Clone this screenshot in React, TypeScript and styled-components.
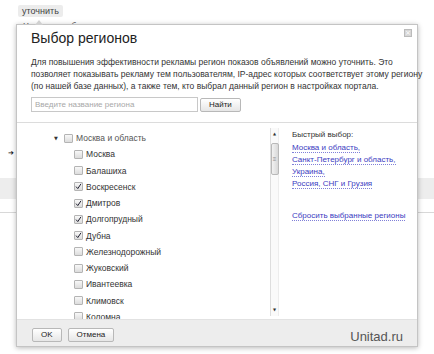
import React from "react"
import styled, { createGlobalStyle } from "styled-components"

const GlobalStyle = createGlobalStyle`
  html, body {
    margin: 0;
    padding: 0;
    background: #ffffff;
    font-family: "Liberation Sans", Arial, sans-serif;
  }
`

type Region = { name: string, checked: boolean }

const regions: Region[] = [
  { name: "Москва", checked: false },
  { name: "Балашиха", checked: false },
  { name: "Воскресенск", checked: true },
  { name: "Дмитров", checked: true },
  { name: "Долгопрудный", checked: true },
  { name: "Дубна", checked: true },
  { name: "Железнодорожный", checked: false },
  { name: "Жуковский", checked: false },
  { name: "Ивантеевка", checked: false },
  { name: "Климовск", checked: false },
  { name: "Коломна", checked: false },
]

const quickLinks = [
  "Москва и область,",
  "Санкт-Петербург и область,",
  "Украина,",
  "Россия, СНГ и Грузия",
]

function CheckBox({ checked }: { checked: boolean }) {
  return (
    <Box>
      {checked && (
        <svg width="7" height="7" viewBox="0 0 7 7">
          <path d="M1 3.6 L2.8 5.6 L6 0.8" fill="none" stroke="#223" strokeWidth="1" />
        </svg>
      )}
    </Box>
  )
}

export default function App() {
  return (
    <Page>
      <GlobalStyle />
      <Tag>уточнить</Tag>
      <HiddenLine>Часы на выбор</HiddenLine>
      <ArrowRow>➔</ArrowRow>
      <Band />
      <Rule />

      <Dialog>
        <Header>
          <Title>Выбор регионов</Title>
          <Close>×</Close>
        </Header>
        <Description>
          Для повышения эффективности рекламы регион показов объявлений можно уточнить. Это<br />
          позволяет показывать рекламу тем пользователям, IP-адрес которых соответствует этому региону<br />
          (по нашей базе данных), а также тем, кто выбрал данный регион в настройках портала.
        </Description>
        <SearchRow>
          <SearchInput placeholder="Введите название региона" />
          <Button>Найти</Button>
        </SearchRow>

        <Body>
          <Tree>
            <TreeRow $level={0}>
              <Toggle>▼</Toggle>
              <CheckBox checked={false} />
              <ParentLabel>Москва и область</ParentLabel>
            </TreeRow>
            {regions.map(r => (
              <TreeRow key={r.name} $level={1}>
                <CheckBox checked={r.checked} />
                <Label>{r.name}</Label>
              </TreeRow>
            ))}
          </Tree>

          <Scrollbar>
            <ScrollArrow>▲</ScrollArrow>
            <Thumb>≡</Thumb>
            <ScrollArrow $down>▼</ScrollArrow>
          </Scrollbar>

          <Quick>
            <QuickTitle>Быстрый выбор:</QuickTitle>
            {quickLinks.map(l => (
              <QuickItem key={l}><QuickLink>{l}</QuickLink></QuickItem>
            ))}
            <ResetItem><QuickLink>Сбросить выбранные регионы</QuickLink></ResetItem>
          </Quick>
        </Body>

        <Footer>
          <Button $w={22}>OK</Button>
          <Button $w={42}>Отмена</Button>
          <Watermark>Unitad.ru</Watermark>
        </Footer>
      </Dialog>
    </Page>
  )
}

const Page = styled.div`
  position: relative;
  width: 434px;
  height: 354px;
  overflow: hidden;
  background: #fff;
`

const Tag = styled.div`
  display: inline-block;
  margin: 5px 0 0 18px;
  padding: 0 4px;
  height: 12px;
  line-height: 12px;
  background: #ececec;
  border-radius: 2px;
  font-size: 9px;
  color: #444;
`

const HiddenLine = styled.div`
  margin: 3px 0 0 23px;
  font-size: 9px;
  line-height: 10px;
  color: #555;
`

const ArrowRow = styled.div`
  margin: 117px 0 0 8px;
  height: 10px;
  font-family: "DejaVu Sans", sans-serif;
  font-size: 7px;
  line-height: 10px;
  color: #111;
`

const Band = styled.div`
  margin-top: 20px;
  height: 21px;
  background: #ededed;
`

const Rule = styled.div`
  margin-top: 13px;
  height: 1px;
  background: #d8d8d8;
`

const Dialog = styled.div`
  position: absolute;
  left: 16px;
  top: 24px;
  width: 400px;
  height: 321px;
  display: flex;
  flex-direction: column;
  background: #fff;
  border: 1px solid #c4c4c4;
  box-shadow: 0 1px 5px rgba(0, 0, 0, 0.28);

  &::before {
    content: "";
    position: absolute;
    left: 18px;
    top: -5px;
    width: 0;
    height: 0;
    border-left: 4px solid transparent;
    border-right: 4px solid transparent;
    border-bottom: 5px solid #d0d0d0;
  }
`

const Header = styled.div`
  position: relative;
  padding: 4px 14px 0;
`

const Title = styled.div`
  font-size: 14px;
  line-height: 18px;
  color: #222;
`

const Close = styled.div`
  position: absolute;
  right: 5px;
  top: 4px;
  width: 6px;
  height: 6px;
  border: 1px solid #bbb;
  background: #d6d6d6;
  color: #fff;
  font-size: 7px;
  line-height: 6px;
  text-align: center;
  font-family: "DejaVu Sans", sans-serif;
`

const Description = styled.div`
  margin: 9px 14px 0;
  font-size: 8.5px;
  line-height: 12px;
  color: #333;
  white-space: nowrap;
`

const SearchRow = styled.div`
  display: flex;
  align-items: center;
  gap: 2px;
  padding: 5px 14px 10px;
  border-bottom: 1px solid #dcdcdc;
`

const SearchInput = styled.input`
  box-sizing: border-box;
  width: 167px;
  height: 15px;
  margin: 0;
  padding: 0 3px;
  border: 1px solid #c8c8c8;
  font-family: "Liberation Sans", Arial, sans-serif;
  font-size: 8px;
  color: #333;
  outline: none;

  &::placeholder {
    color: #a8a8a8;
  }
`

const Button = styled.button<{ $w?: number }>`
  box-sizing: border-box;
  min-width: ${p => (p.$w ? `${p.$w}px` : "auto")};
  height: 14px;
  margin: 0;
  padding: 0 8px;
  border: 1px solid #b8b8b8;
  border-radius: 2px;
  background: linear-gradient(#ffffff, #e6e6e6);
  font-family: "Liberation Sans", Arial, sans-serif;
  font-size: 8px;
  line-height: 12px;
  color: #222;
`

const Body = styled.div`
  flex: 1;
  display: grid;
  grid-template-columns: 253px 9px 1fr;
  min-height: 0;
  overflow: hidden;
`

const Tree = styled.div`
  display: grid;
  grid-auto-rows: 16.25px;
  padding-top: 7px;
  overflow: hidden;
`

const TreeRow = styled.div<{ $level: number }>`
  display: flex;
  align-items: center;
  gap: 3px;
  padding-left: ${p => (p.$level === 0 ? 37 : 57)}px;
`

const Toggle = styled.span`
  width: 5px;
  margin-right: 2px;
  font-family: "DejaVu Sans", sans-serif;
  font-size: 5px;
  color: #333;
`

const Box = styled.span`
  box-sizing: border-box;
  display: inline-flex;
  align-items: center;
  justify-content: center;
  width: 9px;
  height: 9px;
  border: 1px solid #b4b4b4;
  border-radius: 1px;
  background: linear-gradient(#f8f8f8, #dcdcdc);
`

const Label = styled.span`
  font-size: 8.5px;
  color: #333;
`

const ParentLabel = styled(Label)`
  color: #555;
`

const Scrollbar = styled.div`
  display: flex;
  flex-direction: column;
  align-items: center;
  margin: 5px 0 3px;
  border-left: 1px solid #dedede;
  border-right: 1px solid #ededed;
  background: #fafafa;
`

const ScrollArrow = styled.div<{ $down?: boolean }>`
  margin-top: ${p => (p.$down ? "auto" : "3px")};
  margin-bottom: ${p => (p.$down ? "3px" : "0")};
  font-family: "DejaVu Sans", sans-serif;
  font-size: 4px;
  line-height: 6px;
  color: #333;
`

const Thumb = styled.div`
  box-sizing: border-box;
  width: 8px;
  height: 32px;
  margin-top: 6px;
  border: 1px solid #b8b8b8;
  border-radius: 2px;
  background: linear-gradient(90deg, #f2f2f2, #d8d8d8);
  font-size: 6px;
  line-height: 30px;
  text-align: center;
  color: #888;
`

const Quick = styled.div`
  padding: 6px 0 0 13px;
  font-size: 8px;
  line-height: 12px;
`

const QuickTitle = styled.div`
  margin-bottom: 1px;
  color: #333;
`

const QuickItem = styled.div`
  white-space: nowrap;
`

const ResetItem = styled(QuickItem)`
  margin-top: 20px;
`

const QuickLink = styled.a`
  color: #3b3bbf;
  text-decoration: none;
  border-bottom: 1px dotted #8080d8;
  cursor: pointer;
`

const Footer = styled.div`
  flex: 0 0 27px;
  box-sizing: border-box;
  display: flex;
  align-items: flex-end;
  gap: 6px;
  padding: 0 14px 4px 15px;
  background: #ededed;
  border-top: 1px solid #e2e2e2;
`

const Watermark = styled.div`
  margin-left: auto;
  margin-bottom: -3px;
  font-size: 13px;
  line-height: 16px;
  color: #555;
`
